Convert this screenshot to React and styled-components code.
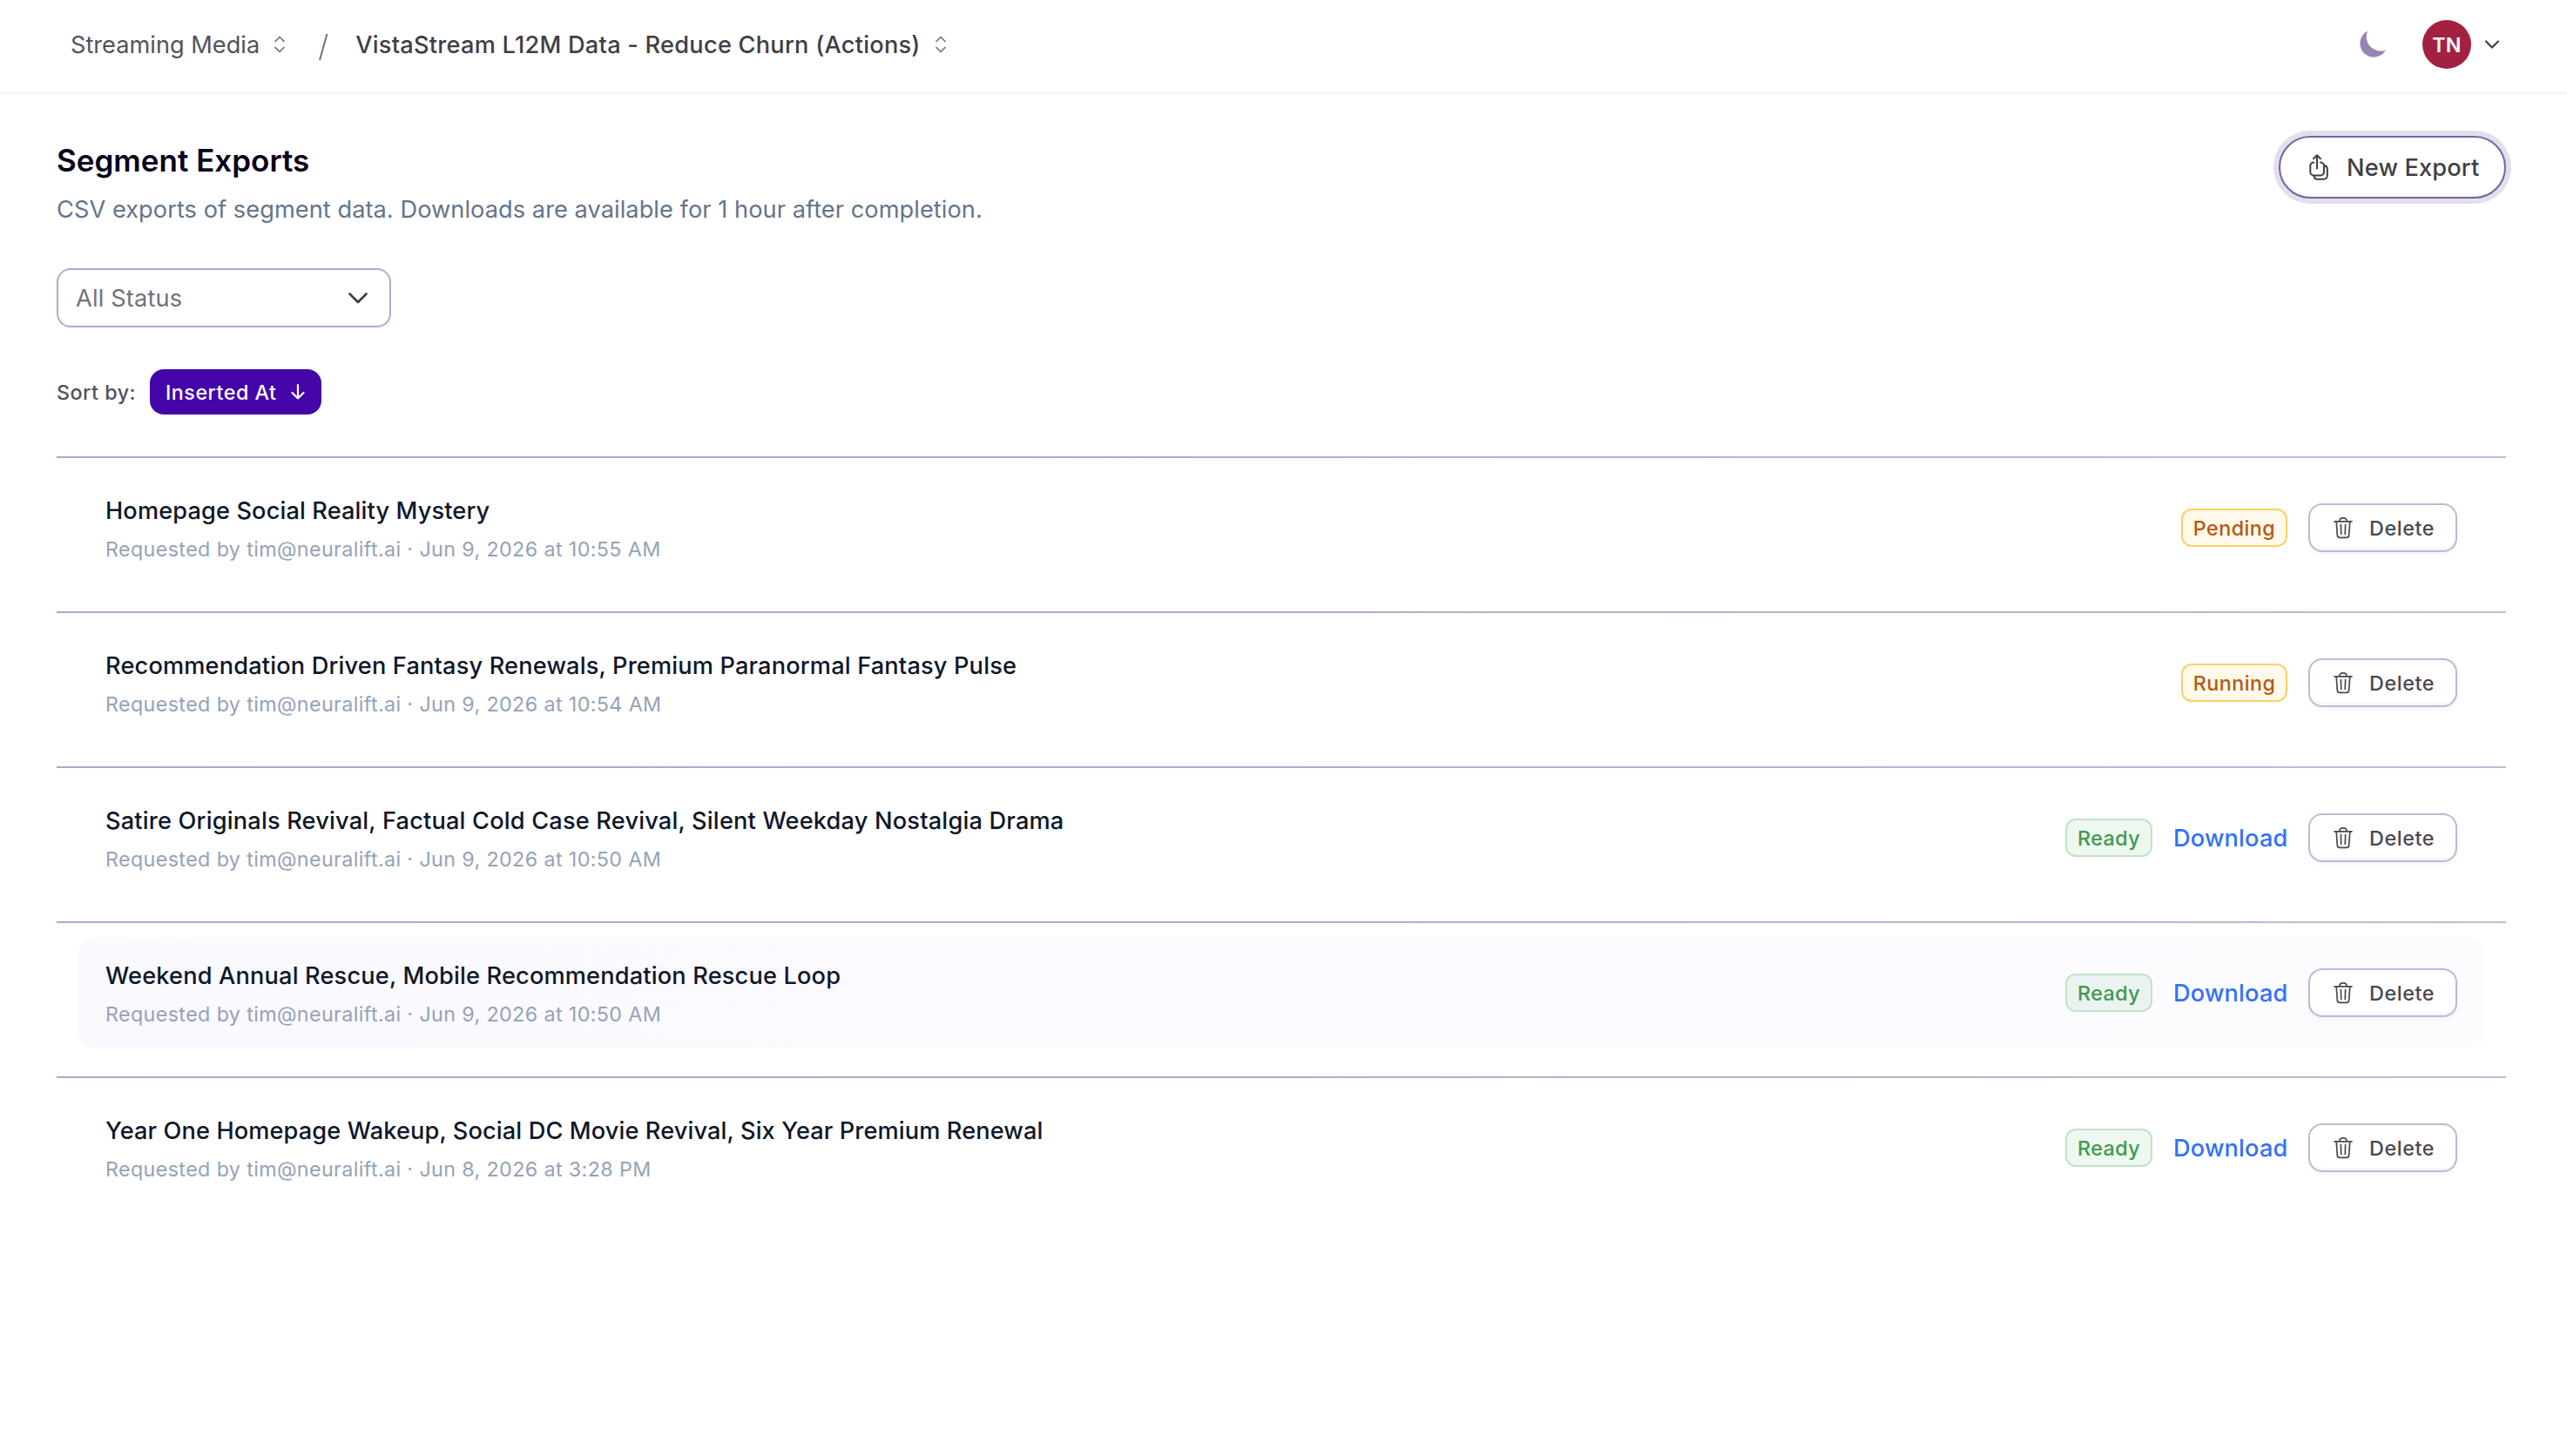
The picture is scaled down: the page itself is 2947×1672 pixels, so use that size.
import React from "react";
import styled, { createGlobalStyle, css } from "styled-components";

const Global = createGlobalStyle`
  *, *::before, *::after { box-sizing: border-box; }
  body { margin: 0; background: #fff; font-family: Inter, "Liberation Sans", sans-serif; -webkit-font-smoothing: antialiased; }
  button { font: inherit; margin: 0; cursor: pointer; }
`;

const Page = styled.div`
  width: 100%;
  min-height: 1672px;
  background: #fff;
`;

const TopBar = styled.header`
  display: flex;
  align-items: center;
  justify-content: space-between;
  height: 108px;
  padding: 0 77px 4px 81px;
  border-bottom: 2px solid #f2f2f7;
`;

const Crumbs = styled.nav`
  display: flex;
  align-items: center;
`;

const Crumb = styled.button`
  display: flex;
  align-items: center;
  gap: 16px;
  padding: 0;
  border: 0;
  background: none;
  font-size: 27.2px;
  line-height: 40px;
  font-weight: ${(p) => (p.$current ? 500 : 400)};
  color: ${(p) => (p.$current ? "#3f3f46" : "#52525b")};
  letter-spacing: ${(p) => (p.$current ? 0.24 : 0)}px;
  white-space: nowrap;
`;

const CrumbText = styled.span`
  padding-top: 1px;
`;

const Divider = styled.svg`
  margin: 6px 31px 0 37px;
`;

const Account = styled.div`
  display: flex;
  align-items: center;
`;

const Avatar = styled.div`
  display: flex;
  align-items: center;
  justify-content: center;
  width: 56px;
  height: 56px;
  margin: 0 15px 0 41px;
  border-radius: 50%;
  background: #a32140;
  color: #fff;
  font-size: 23.3px;
  font-weight: 600;
  letter-spacing: 0.3px;
`;

const Main = styled.main`
  padding: 48px 70px 0 65px;
`;

const Heading = styled.div`
  display: flex;
  justify-content: space-between;
  align-items: flex-start;
`;

const Title = styled.h1`
  margin: 4px 0 0;
  font-size: 35px;
  line-height: 48px;
  font-weight: 600;
  color: #09021a;
`;

const Lead = styled.p`
  margin: 13px 0 0;
  font-size: 27.2px;
  line-height: 40px;
  color: #64748b;
  letter-spacing: 0.055px;
`;

const ExportButton = styled.button`
  display: flex;
  align-items: center;
  width: 261px;
  height: 72px;
  padding: 0 0 0 32px;
  border: 2px solid #79629f;
  border-radius: 36px;
  background: #fff;
  box-shadow: 0 0 0 6px #e3dfeb, inset 0 -2px 3px rgba(0, 0, 0, 0.04);
  gap: 20px;
  font-size: 27.2px;
  font-weight: 500;
  color: #3f3f46;
  letter-spacing: 0.15px;
  white-space: nowrap;
`;

const Select = styled.button`
  display: flex;
  align-items: center;
  justify-content: space-between;
  width: 384px;
  height: 68px;
  margin-top: 47px;
  padding: 0 24px 0 20px;
  border: 2px solid #b5a8cd;
  border-radius: 16px;
  background: #fff;
  font-size: 27.2px;
  color: #71717a;
  letter-spacing: 0.17px;
`;

const SortBar = styled.div`
  display: flex;
  align-items: center;
  margin-top: 48px;
  height: 52px;
`;

const SortLabel = styled.span`
  width: 107px;
  font-size: 23.3px;
  font-weight: 500;
  color: #52525b;
  letter-spacing: 0.5px;
  white-space: nowrap;
`;

const SortButton = styled.button`
  display: flex;
  align-items: center;
  justify-content: space-between;
  width: 197px;
  height: 52px;
  padding: 0 19px 0 18px;
  border: 0;
  border-radius: 16px;
  background: #4405a9;
  color: #fff;
  font-size: 23.3px;
  font-weight: 500;
  letter-spacing: 0.5px;
  white-space: nowrap;
`;

const List = styled.ul`
  margin: 48px 0 0;
  padding: 0;
  list-style: none;
`;

const Item = styled.li`
  height: 178px;
  padding: 16px 24px 32px;
  border-top: 2px solid #b8accf;
  border-image: linear-gradient(90deg, #b2a5ca, #b5a9cd 50%, #c3b9d7) 1;
`;

const Row = styled.div`
  display: flex;
  align-items: flex-start;
  justify-content: space-between;
  height: 128px;
  padding: 0 32px;
  border-radius: 20px;
  background: ${(p) => (p.$active ? "linear-gradient(100deg, #faf9ff, #fcfbfe)" : "transparent")};
`;

const Names = styled.div`
  padding-top: 25px;
  white-space: nowrap;
`;

const Name = styled.div`
  font-size: 27.2px;
  line-height: 40px;
  font-weight: 500;
  color: #0f172a;
  letter-spacing: ${(p) => p.$track}px;
`;

const Meta = styled.div`
  margin-top: 8px;
  font-size: 23.3px;
  line-height: 32px;
  color: #94a3b8;
  letter-spacing: 0.37px;
`;

const Actions = styled.div`
  display: flex;
  align-items: center;
  gap: 24px;
  height: 56px;
  margin-top: 36px;
`;

const tones = {
  amber: css`color: #b65a10; background: #fef9eb; border-color: #fad164;`,
  green: css`color: #3d9a50; background: ${(p) => (p.$active ? "#ebf3f1" : "#eef7f0")}; border-color: #c1e2c7;`,
};

const Badge = styled.span`
  display: flex;
  align-items: center;
  justify-content: center;
  width: ${(p) => (p.$tone === "green" ? 100 : 122)}px;
  height: 44px;
  border: 2px solid;
  border-radius: 12px;
  font-size: 23.3px;
  font-weight: 500;
  letter-spacing: 0.45px;
  ${(p) => tones[p.$tone]}
`;

const Download = styled.a`
  width: 131px;
  padding-top: 1px;
  font-size: 27.2px;
  font-weight: 500;
  line-height: 40px;
  color: #3370fb;
  letter-spacing: 0.15px;
  white-space: nowrap;
`;

const DeleteButton = styled.button`
  display: flex;
  align-items: center;
  gap: 19px;
  width: 171px;
  height: 56px;
  padding: 0 0 0 27px;
  border: 2px solid #c2b7d6;
  border-radius: 16px;
  background: #fff;
  box-shadow: 0 3px 5px rgba(0, 0, 0, 0.035), inset 0 -3px 0 #f7f6f8;
  font-size: 23.3px;
  font-weight: 500;
  color: #484850;
  letter-spacing: 0.6px;
`;

const Stroke = styled.svg`
  display: block;
  flex: none;
  fill: none;
  stroke: ${(p) => p.$c || "currentColor"};
  stroke-width: ${(p) => p.$sw || 2}px;
  stroke-linecap: round;
  stroke-linejoin: round;
`;

const UpDown = () => (
  <Stroke width="14" height="20" viewBox="0 0 14 20" $c="#71717a" $sw={1.7}>
    <path d="M2 6.5 7 1.5l5 5M2 13.5l5 5 5-5" />
  </Stroke>
);

const Moon = () => (
  <svg width="32" height="32" viewBox="0 0 32 32">
    <path fill="#9685b3" d="M10.2 .6A16.2 16.2 0 0 0 31 22.4 15.8 15.8 0 1 1 10.2 .6Z" />
  </svg>
);

const ExportIcon = () => (
  <Stroke width="24" height="32" viewBox="0 0 24 32">
    <path d="M10 17.5V2.4M6 6.2l4-4 4 4" />
    <path d="M6.300 10.500a4 4 0 0 0-4 4v7a4 4 0 0 0 4 4H14a4 4 0 0 0 4-4v-7a4 4 0 0 0-4-4" />
    <path d="M6.600 26.300a4 4 0 0 0 3.700 3.500h7.500a4 4 0 0 0 4-4v-8a4 4 0 0 0-3.300-3.900" />
  </Stroke>
);

const Trash = () => (
  <Stroke width="22" height="26" viewBox="0 0 22 26" $sw={1.7}>
    <path d="M1 5.800h20M3.200 5.800l1.100 15.700a3 3 0 0 0 3 2.900h7.400a3 3 0 0 0 3-2.900L18.800 5.800M6.800 5.500a3.600 3.600 0 0 1 3.600-3.600h1.200a3.600 3.600 0 0 1 3.600 3.600M8.400 9.500l.3 11M13.600 9.500l-.3 11" />
  </Stroke>
);

const rows = [
  { name: "Homepage Social Reality Mystery", when: "Jun 9, 2026 at 10:55 AM", status: "Pending", track: 0.12 },
  { name: "Recommendation Driven Fantasy Renewals, Premium Paranormal Fantasy Pulse", when: "Jun 9, 2026 at 10:54 AM", status: "Running", track: 0.16 },
  { name: "Satire Originals Revival, Factual Cold Case Revival, Silent Weekday Nostalgia Drama", when: "Jun 9, 2026 at 10:50 AM", status: "Ready", track: 0.18 },
  { name: "Weekend Annual Rescue, Mobile Recommendation Rescue Loop", when: "Jun 9, 2026 at 10:50 AM", status: "Ready", active: true, track: 0.16 },
  { name: "Year One Homepage Wakeup, Social DC Movie Revival, Six Year Premium Renewal", when: "Jun 8, 2026 at 3:28 PM", status: "Ready", track: 0.11 },
];

export default function App() {
  return (
    <Page>
      <Global />
      <TopBar>
        <Crumbs>
          <Crumb>
            <CrumbText>Streaming Media</CrumbText>
            <UpDown />
          </Crumb>
          <Divider width="12" height="32" viewBox="0 0 12 32">
            <path d="M10.500 1 2 31" stroke="#71717a" strokeWidth="2" fill="none" />
          </Divider>
          <Crumb $current>
            <CrumbText>VistaStream L12M Data - Reduce Churn (Actions)</CrumbText>
            <UpDown />
          </Crumb>
        </Crumbs>
        <Account>
          <Moon />
          <Avatar>TN</Avatar>
          <Stroke width="18" height="12" viewBox="0 0 18 12" $c="#3f3f46" $sw={2.2}>
            <path d="M2 2.500l7 7 7-7" />
          </Stroke>
        </Account>
      </TopBar>
      <Main>
        <Heading>
          <div>
            <Title>Segment Exports</Title>
            <Lead>CSV exports of segment data. Downloads are available for 1 hour after completion.</Lead>
          </div>
          <ExportButton>
            <ExportIcon />
            <span>New Export</span>
          </ExportButton>
        </Heading>
        <Select>
          <span>All Status</span>
          <Stroke width="24" height="14" viewBox="0 0 24 14" $c="#3a3a42" $sw={2.600}>
            <path d="M2.500 2.500 12 12 21.500 2.500" />
          </Stroke>
        </Select>
        <SortBar>
          <SortLabel>Sort by:</SortLabel>
          <SortButton>
            <span>Inserted At</span>
            <Stroke width="16" height="20" viewBox="0 0 16 20" $sw={2.200}>
              <path d="M8 2v15.500M1.500 11 8 17.500 14.500 11" />
            </Stroke>
          </SortButton>
        </SortBar>
        <List>
          {rows.map((r) => (
            <Item key={r.name}>
              <Row $active={r.active}>
                <Names>
                  <Name $track={r.track}>{r.name}</Name>
                  <Meta>Requested by tim@neuralift.ai · {r.when}</Meta>
                </Names>
                <Actions>
                  <Badge $tone={r.status === "Ready" ? "green" : "amber"} $active={r.active}>
                    {r.status}
                  </Badge>
                  {r.status === "Ready" && <Download>Download</Download>}
                  <DeleteButton>
                    <Trash />
                    <span>Delete</span>
                  </DeleteButton>
                </Actions>
              </Row>
            </Item>
          ))}
        </List>
      </Main>
    </Page>
  );
}
